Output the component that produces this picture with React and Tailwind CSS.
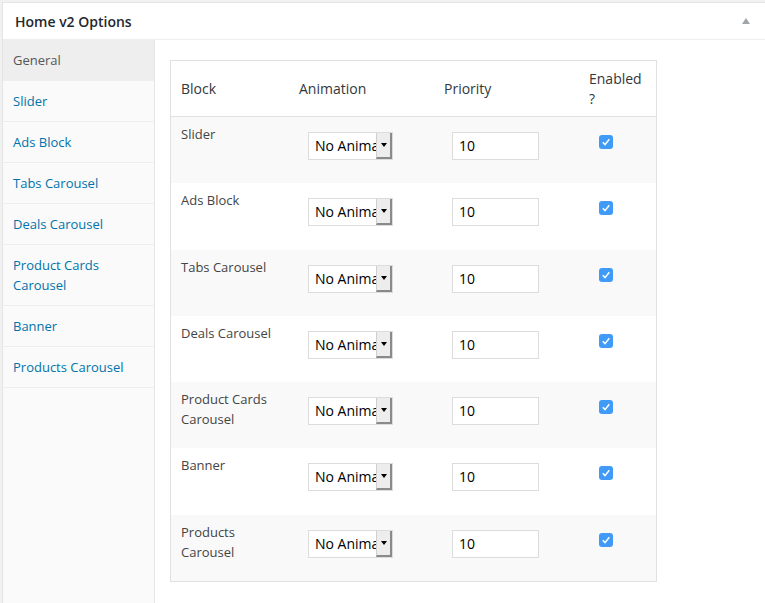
import React from "react";

const tabs = [
  "General",
  "Slider",
  "Ads Block",
  "Tabs Carousel",
  "Deals Carousel",
  "Product Cards Carousel",
  "Banner",
  "Products Carousel",
];

const blocks = [
  ["Slider"],
  ["Ads Block"],
  ["Tabs Carousel"],
  ["Deals Carousel"],
  ["Product Cards", "Carousel"],
  ["Banner"],
  ["Products", "Carousel"],
];

const Select = () => (
  <div className="flex h-[28px] w-[85px] border border-[#dcdcdc] bg-white">
    <div className="flex-1 overflow-hidden whitespace-nowrap pl-[6px] text-[14px] leading-[26px] text-black">
      No Animation
    </div>
    <div className="flex w-[16px] items-center justify-center border-r-2 border-b-2 border-l border-r-[#8a8a8a] border-b-[#8a8a8a] border-l-[#cfcfcf] bg-[#ededed]">
      <span className="block h-0 w-0 border-x-[3px] border-t-[4px] border-x-transparent border-t-black" />
    </div>
  </div>
);

const Check = () => (
  <div className="flex h-[14px] w-[14px] items-center justify-center rounded-[3px] bg-[#3f9bf7]">
    <svg width="10" height="10" viewBox="0 0 10 10">
      <path d="M1.8 5.3 L4 7.6 L8.3 2.3" fill="none" stroke="white" strokeWidth="1.5" />
    </svg>
  </div>
);

export default function App() {
  return (
    <div className="min-h-[603px] bg-[#f1f1f1] pt-[2px] pl-[2px] font-['Open_Sans',sans-serif]">
      <div className="flex h-[601px] flex-col border border-r-0 border-b-0 border-[#e5e5e5] bg-white">
        {/* header */}
        <div className="flex h-[37px] shrink-0 items-center justify-between border-b border-[#eeeeee] pl-[12px] pr-[15px]">
          <h2 className="text-[14px] font-semibold text-[#23282d]">Home v2 Options</h2>
          <span className="block h-0 w-0 border-x-[4px] border-b-[6px] border-x-transparent border-b-[#a0a5aa]" />
        </div>

        <div className="flex flex-1">
          {/* sidebar */}
          <div className="w-[152px] shrink-0 border-r border-[#e5e5e5] bg-[#fafafa]">
            {tabs.map((t, i) => (
              <div
                key={t}
                className={`border-b border-[#eeeeee] px-[10px] py-[10px] text-[13px] leading-[20px] ${
                  i === 0 ? "bg-[#eeeeee] text-[#555]" : "text-[#0073aa]"
                }`}
              >
                {t}
              </div>
            ))}
          </div>

          {/* content */}
          <div className="flex-1 pl-[15px] pt-[20px]">
            <div className="w-[487px] border border-[#e1e1e1] text-[#32373c]">
              <div className="grid h-[56px] grid-cols-[117px_145px_145px_78px] items-center border-b border-[#e1e1e1] bg-white text-[14px] leading-[20px]">
                <div className="pl-[10px]">Block</div>
                <div className="pl-[11px]">Animation</div>
                <div className="pl-[11px]">Priority</div>
                <div className="w-[68px] pl-[11px]">Enabled ?</div>
              </div>
              {blocks.map((b, i) => (
                <div
                  key={i}
                  className={`grid h-[66.3px] grid-cols-[117px_145px_145px_78px] ${
                    i % 2 === 0 ? "bg-[#f9f9f9]" : "bg-white"
                  }`}
                >
                  <div className="pl-[10px] pt-[7px] text-[13px] leading-[20px] text-[#444]">
                    {b.map((l) => (
                      <div key={l}>{l}</div>
                    ))}
                  </div>
                  <div className="pl-[20px] pt-[15px]">
                    <Select />
                  </div>
                  <div className="pl-[19px] pt-[15px]">
                    <div className="h-[28px] w-[87px] border border-[#dcdcdc] bg-white pl-[6px] text-[14px] leading-[26px] text-black">
                      10
                    </div>
                  </div>
                  <div className="pl-[21px] pt-[18px]">
                    <Check />
                  </div>
                </div>
              ))}
            </div>
          </div>
        </div>
      </div>
    </div>
  );
}
